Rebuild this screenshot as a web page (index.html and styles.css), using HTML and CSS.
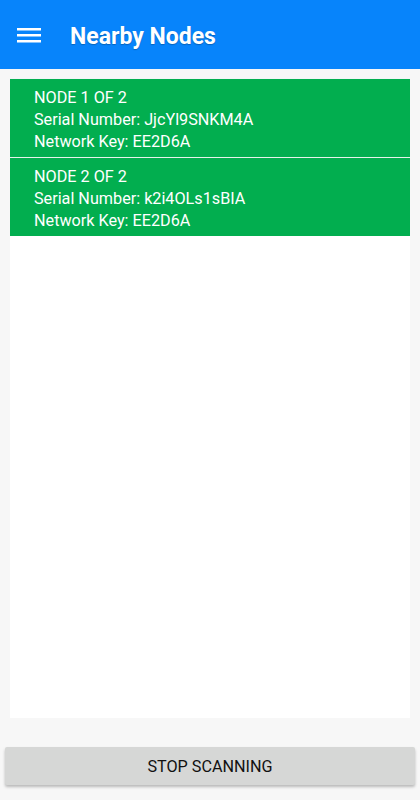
FILE: index.html
```html
<!DOCTYPE html>
<html lang="en">
<head>
	<meta charset="UTF-8">
	<title>Nearby Nodes</title>
	<link rel="stylesheet" href="styles.css">
</head>
<body>
	<div id="app">
		<div class="bar">
			<a class="menu" href="javascript:;">
				<svg width="24" height="18" viewBox="0 0 24 18"><rect x="0" y="2" width="24" height="2.5" fill="#fff"/><rect x="0" y="8" width="24" height="2.5" fill="#fff"/><rect x="0" y="14" width="24" height="2.5" fill="#fff"/></svg>
			</a>
			<h1>Nearby Nodes</h1>
		</div>
		<div class="list">
			<ul>
				<li>
					<p>NODE 1 OF 2</p>
					<p>Serial Number: JjcYl9SNKM4A</p>
					<p>Network Key: EE2D6A</p>
				</li>
				<li>
					<p>NODE 2 OF 2</p>
					<p>Serial Number: k2i4OLs1sBIA</p>
					<p>Network Key: EE2D6A</p>
				</li>
			</ul>
		</div>
		<div class="bottom">
			<a class="btn" href="javascript:;">STOP SCANNING</a>
		</div>
	</div>
</body>
</html>
```

FILE: styles.css
```css
body,ul,p,h1{margin: 0;padding: 0;}
body{font-family: Roboto, "Noto Sans", sans-serif;background: #f7f7f7;}
li{list-style: none;}
a{text-decoration: none;}
#app{width: 420px;height: 800px;display: flex;flex-direction: column;}
.bar{height: 69px;background: #0784fb;display: flex;align-items: center;flex-shrink: 0;}
.menu{display: flex;margin-left: 17px;margin-top: 1px;}
.bar h1{margin-left: 29px;font-size: 23px;font-weight: bold;color: #fff;text-shadow: 0 1px 1px rgba(0,0,0,0.25);margin-top: 3px;}
.list{margin: 9px 10px 0;height: 640px;background: #fff;}
.list ul{border-top: 1px solid #f2f6f6;}
.list li{background: #02ae4f;padding: 8px 24px 4px;border-bottom: 1px solid #e6f3ea;}
.list li:last-child{border-bottom: none;}
.list p{font-size: 16.2px;line-height: 22px;color: #fff;}
.bottom{padding: 29px 5px 0;}
.btn{display: block;height: 38px;line-height: 39px;background: #d6d7d6;color: #111;text-align: center;font-size: 16.2px;border-radius: 2px;box-shadow: 0 2px 3px rgba(0,0,0,0.25);}
```
